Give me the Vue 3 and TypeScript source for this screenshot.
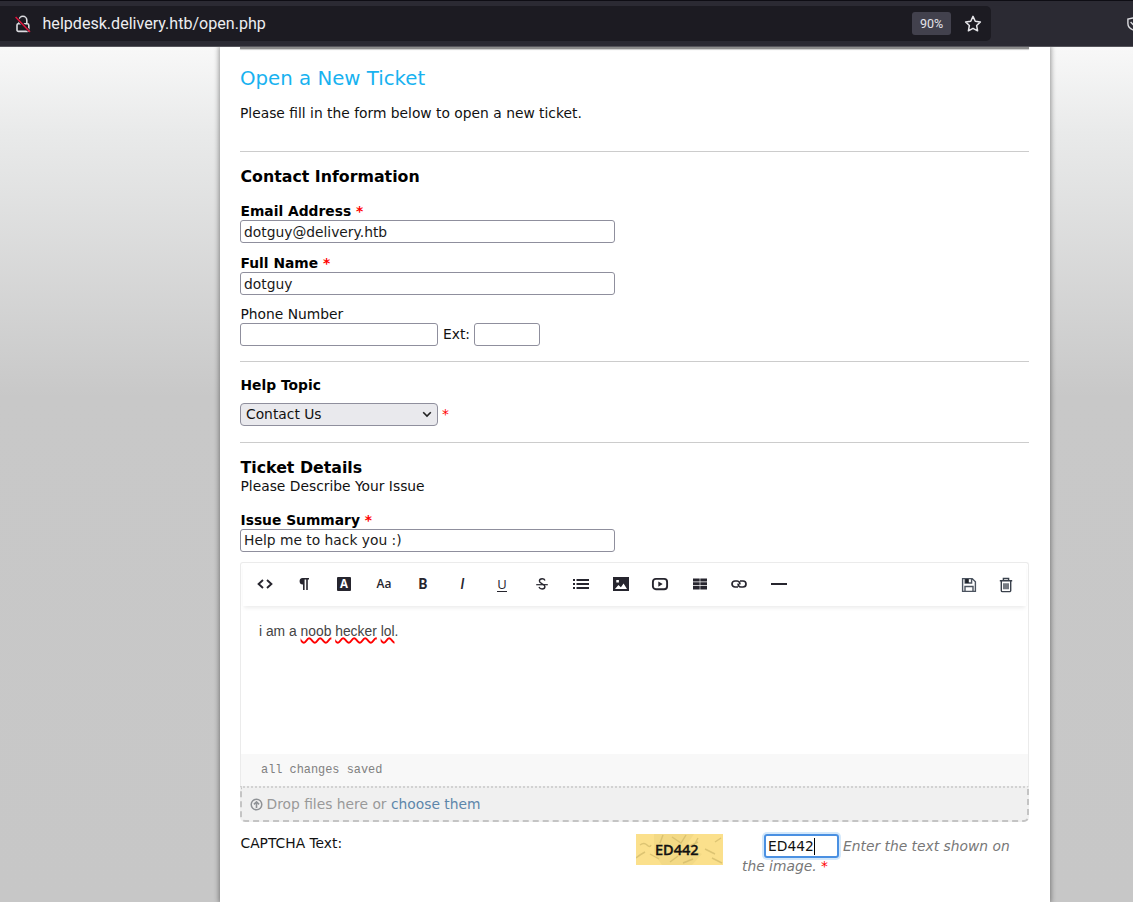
<script setup lang="ts">
import { ref } from 'vue'

interface Tool {
  name: string
}

const email = ref<string>('dotguy@delivery.htb')
const fullName = ref<string>('dotguy')
const phone = ref<string>('')
const ext = ref<string>('')
const summary = ref<string>('Help me to hack you :)')
const captcha = ref<string>('ED442')

const tools: Tool[] = [
  { name: 'html' },
  { name: 'format' },
  { name: 'color' },
  { name: 'font' },
  { name: 'bold' },
  { name: 'italic' },
  { name: 'underline' },
  { name: 'deleted' },
  { name: 'lists' },
  { name: 'image' },
  { name: 'video' },
  { name: 'table' },
  { name: 'link' },
  { name: 'line' },
]
</script>

<template>
  <div class="window">
    <header class="chrome">
      <div class="urlbar">
        <svg class="lock" width="18" height="20" viewBox="0 0 18 20" fill="none">
          <path d="M5 9V6.200a3.800 3.800 0 0 1 7.800 0V10M4 9.800h9.400a1.400 1.400 0 0 1 1.400 1.400v4.900a1.300 1.300 0 0 1-1.300 1.300h-9a1.500 1.500 0 0 1-1.500-1.500v-4.700a1.400 1.400 0 0 1 1-1.400z" stroke="#dcdce0" stroke-width="1.600" />
          <path d="M2.900 4.200l12 12.600" stroke="#1c1b22" stroke-width="3" />
          <path d="M1.600 3l14.400 15" stroke="#e0143c" stroke-width="1.500" />
        </svg>
        <span class="address">helpdesk.delivery.htb/open.php</span>
        <span class="zoom">90%</span>
        <svg class="star" width="18" height="18" viewBox="0 0 18 18" fill="none">
          <path d="M9 1.400l2.250 4.800 5.150.7-3.750 3.650.95 5.250L9 13.300l-4.600 2.500.95-5.250L1.600 6.900l5.150-.7z" stroke="#e6e6ea" stroke-width="1.500" stroke-linejoin="round" />
        </svg>
      </div>
      <svg class="shield" width="14" height="14" viewBox="0 0 14 14" fill="none">
        <path d="M7 1L1.900 2.100v4.400c0 3 2 5.200 5.100 6.400 3.100-1.200 5.100-3.400 5.100-6.400V2.100zM4.600 5L7 7.400 11 3" stroke="#dcdce0" stroke-width="1.400" />
      </svg>
    </header>

    <main class="page">
      <div class="sheet">
        <div class="nav-edge"></div>
        <h1 class="title">Open a New Ticket</h1>
        <p class="intro">Please fill in the form below to open a new ticket.</p>
        <hr class="rule r1" />

        <h2 class="section contact">Contact Information</h2>
        <label class="label strong l-email">Email Address <b class="req">*</b></label>
        <input v-model="email" class="field wide" type="text" />
        <label class="label strong l-name">Full Name <b class="req">*</b></label>
        <input v-model="fullName" class="field wide" type="text" />
        <label class="label l-phone">Phone Number</label>
        <div class="phone">
          <input v-model="phone" class="field tel" type="text" />
          <span class="ext-label">Ext:</span>
          <input v-model="ext" class="field ext" type="text" />
        </div>
        <hr class="rule r2" />

        <label class="label strong l-topic">Help Topic</label>
        <div class="topic">
          <div class="select">
            <span>Contact Us</span>
            <svg width="10" height="7" viewBox="0 0 10 7" fill="none"><path d="M1.200 1.200L5 5l3.800-3.800" stroke="#222" stroke-width="1.600" /></svg>
          </div>
          <span class="req thin">*</span>
        </div>
        <hr class="rule r3" />

        <h2 class="section details">Ticket Details</h2>
        <p class="label sub">Please Describe Your Issue</p>
        <label class="label strong l-summary">Issue Summary <b class="req">*</b></label>
        <input v-model="summary" class="field wide last" type="text" />

        <div class="editor">
          <div class="toolbar">
            <span v-for="tool in tools" :key="tool.name" class="tool">
              <svg v-if="tool.name === 'html'" width="18" height="16" viewBox="0 0 18 16" class="line"><path d="M7 4L2.600 8 7 12M11 4l4.400 4-4.400 4" stroke-width="1.900" /></svg>
              <svg v-else-if="tool.name === 'format'" width="16" height="16" viewBox="0 0 16 16"><path d="M6.600 2H13v1.600h-1.200V14h-1.600V3.600H8.600V14H7V8.400A3.200 3.200 0 0 1 6.600 2z" /></svg>
              <span v-else-if="tool.name === 'color'" class="glyph boxed">A</span>
              <span v-else-if="tool.name === 'font'" class="glyph aa">Aa</span>
              <span v-else-if="tool.name === 'bold'" class="glyph b">B</span>
              <span v-else-if="tool.name === 'italic'" class="glyph i">I</span>
              <span v-else-if="tool.name === 'underline'" class="glyph u">U</span>
              <svg v-else-if="tool.name === 'deleted'" width="16" height="16" viewBox="0 0 16 16" class="line"><path d="M11 4.400C10.500 3.200 9.500 2.800 8.200 2.800c-1.600 0-2.800.9-2.800 2.200C5.400 6.700 7 7.300 8.200 7.900c1.500.6 2.700 1.200 2.700 2.600 0 1.500-1.200 2.500-2.800 2.500-1.500 0-2.600-.7-3.100-2" stroke-width="1.400" /><path d="M2.200 8.700h11.600" stroke-width="1.200" /></svg>
              <svg v-else-if="tool.name === 'lists'" width="18" height="16" viewBox="0 0 18 16"><path d="M1 3h2v2H1zM4.500 3H17v2H4.500zM1 7h2v2H1zM4.500 7H17v2H4.500zM1 11h2v2H1zM4.500 11H17v2H4.500z" /></svg>
              <svg v-else-if="tool.name === 'image'" width="16" height="16" viewBox="0 0 16 16"><path fill-rule="evenodd" d="M0 1h16v14H0zM3.300 4v2.600h2.600V4zM2 13h12l-3.400-5.600-2.700 3.800-2.500-2.200z" /></svg>
              <svg v-else-if="tool.name === 'video'" width="18" height="16" viewBox="0 0 18 16"><rect x="1.900" y="2.900" width="14.200" height="10.400" rx="3" fill="none" stroke="#26252e" stroke-width="1.900" /><path d="M7.300 5.500l4.400 2.600-4.400 2.600z" /></svg>
              <svg v-else-if="tool.name === 'table'" width="16" height="16" viewBox="0 0 16 16"><path d="M1 2.500h6.700v3H1zM8.300 2.500H15v3H8.300zM1 6.300h6.700v3H1zM8.300 6.300H15v3H8.300zM1 10.100h6.700v3.400H1zM8.300 10.100H15v3.400H8.300z" /></svg>
              <svg v-else-if="tool.name === 'link'" width="18" height="16" viewBox="0 0 18 16" class="line"><path d="M8 11H5a3 3 0 0 1 0-6h2.200a2.800 2.800 0 0 1 2.600 3.400M10 5h3a3 3 0 0 1 0 6h-2.200a2.800 2.800 0 0 1-2.600-3.400" stroke-width="1.700" /></svg>
              <svg v-else width="18" height="16" viewBox="0 0 18 16"><path d="M1 7h16v2H1z" /></svg>
            </span>
            <span class="spacer"></span>
            <svg class="save" width="16" height="16" viewBox="0 0 16 16" fill="none"><path d="M1.600 1.600h9.600l3.200 3.200v9.600H1.600zM4 14V9.500h8V14M4.200 2v4h6.400V2" stroke="#4b535f" stroke-width="1.400" /><path d="M4.200 2h3.600v4H4.200z" fill="#20242b" /></svg>
            <svg class="trash" width="14" height="16" viewBox="0 0 14 16" fill="none"><path d="M.8 3.800h12.400M4.400 3.600V1.500h5.200v2.100M2.300 4v9.400a1.200 1.200 0 0 0 1.200 1.200h7a1.200 1.200 0 0 0 1.200-1.200V4M5 6.200v6M7 6.200v6M9 6.200v6" stroke="#3a414c" stroke-width="1.400" /></svg>
          </div>
          <div class="body">
            i am a <span class="typo">noob</span> <span class="typo">hecker</span> <span class="typo">lol</span>.
          </div>
          <div class="status">all changes saved</div>
        </div>
        <div class="dropzone">
          <svg width="13" height="13" viewBox="0 0 13 13" fill="none"><circle cx="6.500" cy="6.500" r="5.300" stroke="#8f9296" stroke-width="1.500" /><path d="M6.500 10V4M3.900 6.400l2.600-2.600 2.600 2.600" stroke="#8f9296" stroke-width="1.600" /></svg>
          <span class="drop-text">Drop files here or <a>choose them</a></span>
        </div>

        <div class="captcha">
          <span class="label cap-label">CAPTCHA Text:</span>
          <div class="cap-image">
            <svg width="87" height="31" viewBox="0 0 87 31" fill="none">
              <path d="M18 0h40l-8 12 16 8-10 11H26l-8-12z" fill="#f0d682" opacity=".7" />
              <path d="M4 11q4-3 7 0t4 0M0 24q5-4 9-6M14 20l9 5M27 1l-3 8M36 3l9 6 5-8M50 14l12-6M62 4l-5 9M69 15l10 5M76 24l10 5M34 28l8-6M47 29l10-4M79 8l6-4" stroke="#cdb566" stroke-width="1.400" opacity=".65" />
            </svg>
            <span class="cap-code">ED442</span>
          </div>
          <div class="cap-answer">
            <div class="cap-line">
              <span class="cap-input">{{ captcha }}<i class="caret"></i></span>
              <em>Enter the text shown on</em>
            </div>
            <div class="cap-rest"><em>the image.</em> <span class="req">*</span></div>
          </div>
        </div>
      </div>
    </main>
  </div>
</template>

<style>
body {
  overflow: hidden;
}
</style>

<style scoped>
* {
  box-sizing: border-box;
}
.window {
  width: 1133px;
  height: 902px;
  overflow: hidden;
  display: flex;
  flex-direction: column;
  font-family: "DejaVu Sans", sans-serif;
  font-size: 13.83px;
  color: #111;
}
.chrome {
  flex: none;
  height: 47px;
  background: #2b2a33;
  border-top: 1px solid #0e0d14;
  border-bottom: 1px solid #55545b;
  display: flex;
  align-items: flex-start;
  overflow: hidden;
}
.urlbar {
  flex: none;
  width: 991px;
  height: 35px;
  margin-top: 5px;
  background: #1c1b22;
  border-radius: 0 5px 5px 0;
  display: flex;
  align-items: center;
}
.lock {
  margin-left: 14px;
}
.address {
  margin-left: 10.5px;
  font-family: Roboto, sans-serif;
  font-size: 16.08px;
  line-height: 20px;
  color: #ededf0;
  white-space: nowrap;
}
.zoom {
  margin-left: auto;
  width: 39px;
  height: 23px;
  border-radius: 3px;
  background: #42414d;
  color: #e4e4ea;
  font: 12.5px/24px Roboto, sans-serif;
  text-align: center;
}
.star {
  margin: 0 9px 0 13px;
}
.shield {
  flex: none;
  margin: 16px 0 0 135px;
}
.page {
  height: 855px;
  background: linear-gradient(#f8f8f8 0, #e9eaea 85px, #c8c8c8 350px, #c7c7c7 100%);
  padding-left: 220px;
}
.sheet {
  width: 830px;
  height: 855px;
  padding: 0 21px 0 20px;
  background: #fff;
  box-shadow: 0 0 5px 1px rgba(0, 0, 0, 0.4);
  clip-path: inset(0 -10px 0 -10px);
}
.nav-edge {
  height: 2px;
  background: #8c8c8c;
  box-shadow: 0 1px 1px #ccc;
}
.title {
  margin: 17px 0 0;
  font-size: 19.75px;
  font-weight: 400;
  line-height: 26px;
  color: #18b2f0;
}
.intro {
  margin: 11px 0 0;
  line-height: 20px;
}
.rule {
  border: 0;
  height: 1px;
  background: #ccc;
  margin: 0;
}
.r1 { margin-top: 28px; }
.r2 { margin-top: 15px; }
.r3 { margin-top: 16px; }
.section {
  margin: 0;
  padding-left: 0.5px;
  font-size: 15.8px;
  line-height: 20px;
  font-weight: 700;
  color: #000;
}
.contact { margin-top: 15px; }
.details {
  margin-top: 15px;
  line-height: 19px;
}
.label {
  display: block;
  margin: 0;
  padding-left: 0.5px;
  line-height: 18px;
}
.strong {
  font-weight: 700;
  color: #000;
}
.l-email { margin-top: 15px; }
.l-name { margin-top: 11px; }
.l-phone { margin-top: 10px; }
.l-topic { margin-top: 14px; }
.l-summary { margin-top: 16px; }
.req {
  color: #f00;
}
.field {
  display: block;
  height: 23px;
  margin: 0;
  padding: 0 3px;
  border: 1px solid #8f8f9d;
  border-radius: 3px;
  background: #fff;
  font: inherit;
  color: #1a1a1a;
  outline: none;
}
.last { padding-bottom: 2px; }
.wide { width: 375px; }
.phone, .topic {
  display: flex;
  align-items: center;
  line-height: 21px;
}
.tel { width: 198px; }
.ext { width: 66px; }
.ext-label {
  width: 36px;
  padding-left: 5px;
}
.topic { margin-top: 9px; }
.select {
  width: 198px;
  height: 23px;
  padding: 0 5px;
  display: flex;
  align-items: center;
  justify-content: space-between;
  border: 1px solid #8f8f9d;
  border-radius: 4px;
  background: #e9e9ed;
}
.thin { margin-left: 4px; }
.editor {
  margin-top: 10px;
  height: 224px;
  border: 1px solid #ebebeb;
  border-bottom: 0;
  border-radius: 3px 3px 0 0;
  display: flex;
  flex-direction: column;
}
.toolbar {
  flex: none;
  height: 43px;
  margin: 0 2px;
  padding: 0 0 2px 2px;
  display: flex;
  align-items: center;
  box-shadow: 0 3px 4px -1px rgba(0, 0, 0, 0.08);
}
.tool {
  width: 39.55px;
  height: 30px;
  display: flex;
  align-items: center;
  justify-content: center;
}
.tool svg { fill: #26252e; }
.tool svg.line {
  fill: none;
  stroke: #26252e;
}
.glyph {
  font: 14px/16px "Open Sans", sans-serif;
  color: #26252e;
}
.boxed {
  width: 14px;
  height: 14px;
  line-height: 14px;
  font-size: 11.5px;
  font-weight: 700;
  text-align: center;
  background: #26252e;
  color: #fff;
  border-radius: 1px;
}
.aa {
  font-size: 12px;
  font-weight: 600;
  padding-left: 1px;
}
.b { font-weight: 700; font-family: Roboto, sans-serif; }
.i { font-style: italic; font-weight: 500; font-family: Roboto, sans-serif; }
.u {
  height: 15px;
  margin-top: 1px;
  line-height: 14px;
  border-bottom: 1px solid #26252e;
  font-size: 13px;
}
.spacer { flex: 1; }
.save { margin: 2px 22px 0 0; }
.trash { margin: 2px 13px 0 0; }
.body {
  flex: 1;
  padding: 15px 18px;
  font: 13.85px/20px "Liberation Sans", Arial, sans-serif;
  color: #444;
}
.typo {
  text-decoration: underline wavy #f00 1.5px;
  text-decoration-skip-ink: none;
}
.status {
  flex: none;
  height: 32px;
  padding-left: 20px;
  background: #f8f8f8;
  font: 11.9px/32px "Liberation Mono", monospace;
  color: #808080;
}
.dropzone {
  height: 36px;
  padding-left: 8px;
  display: flex;
  align-items: center;
  border: 2px dashed #c4c4c4;
  border-top: 2px dotted #d2d2d2;
  border-radius: 0 0 5px 5px;
  background: #f0f0f0;
  color: #999;
}
.drop-text { margin-left: 3.5px; }
.drop-text a { color: #5d86aa; }
.captcha {
  display: flex;
  align-items: flex-start;
}
.cap-label {
  flex: none;
  width: 396px;
  margin-top: 12px;
}
.cap-image {
  flex: none;
  position: relative;
  width: 87px;
  height: 31px;
  margin-top: 12px;
  background: #fbe08c;
}
.cap-image svg { display: block; }
.cap-code {
  position: absolute;
  left: 19px;
  top: 6px;
  font: 500 14.5px/18px "Noto Sans", sans-serif;
  color: #111;
  -webkit-text-stroke: 0.4px #111;
}
.cap-answer {
  flex: none;
  margin: 12px 0 0 19px;
  white-space: nowrap;
  color: #777;
}
.cap-line {
  display: flex;
  align-items: center;
  padding-left: 22px;
}
.cap-rest { line-height: 16px; }
.cap-input {
  width: 75px;
  height: 24px;
  margin-right: 4px;
  padding-left: 2px;
  display: flex;
  align-items: center;
  border: 2px solid #4a90e2;
  border-radius: 3px;
  box-shadow: 0 0 0 2px #d3e8fb;
  color: #111;
}
.caret {
  width: 1px;
  height: 17px;
  background: #000;
}
</style>
